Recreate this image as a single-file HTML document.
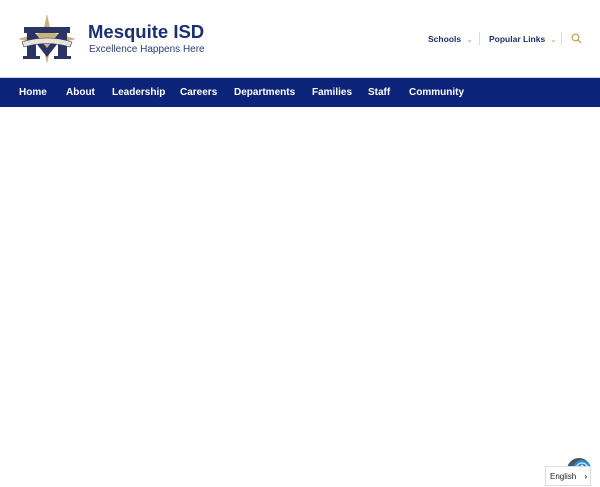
<!DOCTYPE html>
<html><head><style>
body{margin:0;width:600px;height:480px;overflow:hidden;background:#fff;font-family:"Liberation Sans",sans-serif;position:relative}
.a{position:absolute;white-space:nowrap}
.nav{position:absolute;left:0;top:77px;width:600px;height:29px;background:#0c237a;border-top:1px solid #c8d0e6}
.nav span{position:absolute;top:9px;color:#fff;font-size:10px;font-weight:bold}
.t{color:#1c2f73;font-weight:bold}
</style></head><body>
<svg class="a" style="left:18px;top:14px" width="58" height="50" viewBox="0 0 58 50">
<polygon points="29,0 33,18 58,25 33,31 29,50 25,31 0,25 25,18" fill="#c9b27c"/>
<rect x="6" y="13" width="46" height="6" fill="#2a3566"/>
<path d="M9 19 L17 19 L29 34 L41 19 L49 19 L49 42 L53 42 L53 45 L36 45 L36 42 L40 42 L40 29 L29 43 L18 29 L18 42 L22 42 L22 45 L5 45 L5 42 L9 42Z" fill="#2a3566"/>
<path d="M4 28 Q29 20 54 28 L52 33 Q29 26 6 33Z" fill="#e8e4d8" stroke="#2a3566" stroke-width="0.6"/>
</svg>
<div class="a t" style="left:88px;top:21px;font-size:18.5px">Mesquite ISD</div>
<div class="a t" style="left:89px;top:44px;font-size:10px;font-weight:normal;color:#2b3d7e">Excellence Happens Here</div>
<div class="a t" style="left:428px;top:34px;font-size:8.5px">Schools <span style="color:#c9a96a;font-size:7px;margin-left:3px">&#8964;</span></div>
<div class="a" style="left:479px;top:32px;width:1px;height:13px;background:#ddd"></div>
<div class="a t" style="left:489px;top:34px;font-size:8.5px">Popular Links <span style="color:#c9a96a;font-size:7px;margin-left:3px">&#8964;</span></div>
<div class="a" style="left:561px;top:32px;width:1px;height:13px;background:#ddd"></div>
<svg class="a" style="left:571px;top:33px" width="11" height="11" viewBox="0 0 11 11"><circle cx="4.5" cy="4.5" r="3.3" fill="none" stroke="#c9a96a" stroke-width="1.4"/><line x1="7" y1="7" x2="10" y2="10" stroke="#c9a96a" stroke-width="1.5"/></svg>
<div class="nav">
<span style="left:19px">Home</span><span style="left:66px">About</span><span style="left:112px">Leadership</span><span style="left:180px">Careers</span><span style="left:234px">Departments</span><span style="left:312px">Families</span><span style="left:368px">Staff</span><span style="left:409px">Community</span>
</div>
<svg class="a" style="left:566px;top:457px" width="26" height="26" viewBox="0 0 26 26"><circle cx="13" cy="13" r="12" fill="#4a5560"/><circle cx="16" cy="12" r="9" fill="#2a8fd0"/><circle cx="16" cy="12" r="6" fill="none" stroke="#fff" stroke-width="1"/><circle cx="16" cy="9" r="1.2" fill="#fff"/></svg>
<div class="a" style="left:545px;top:466px;width:46px;height:20px;background:#fff;border:1px solid #ddd;font-size:8px;color:#222;line-height:20px;padding-left:4px;box-sizing:border-box">English <span style="margin-left:6px;font-weight:bold">&#8250;</span></div>
</body></html>
